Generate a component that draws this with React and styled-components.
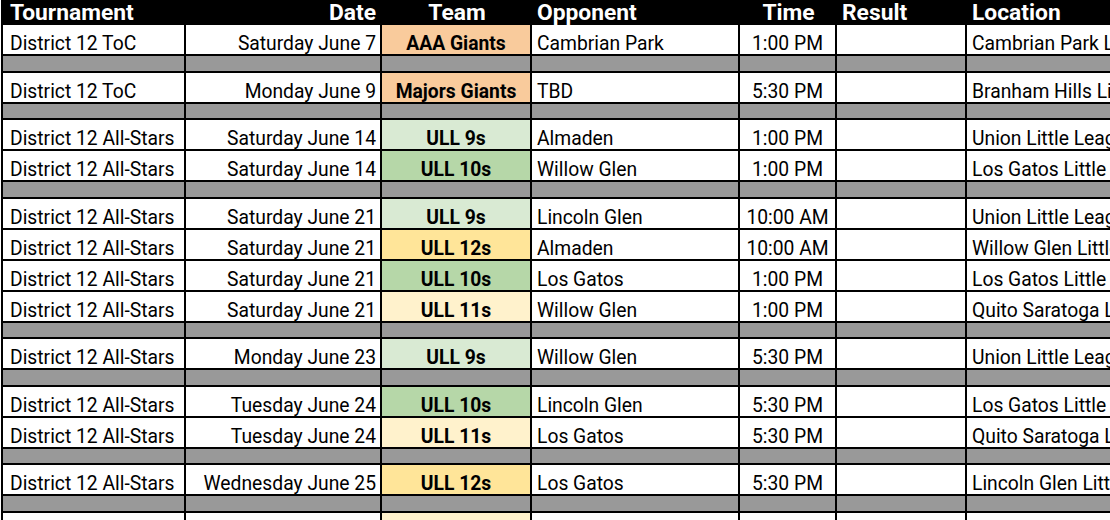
import React from "react";
import styled, { createGlobalStyle } from "styled-components";

const GlobalStyle = createGlobalStyle`
  html, body {
    margin: 0;
    padding: 0;
    background: #fff;
    overflow: hidden;
  }
  body {
    font-family: Roboto, "Liberation Sans", Arial, sans-serif;
    color: #000;
  }
`;

const COLS = "183px 196px 150px 208px 97px 130px 340px";

const TEAM_COLORS = {
  orange: "#f9cb9c",
  mint: "#d9ead3",
  green: "#b6d7a8",
  cream: "#fff2cc",
  yellow: "#ffe599",
};

const Sheet = styled.div`
  width: max-content;
  margin-left: 1px;
  border-left: 2px solid #000;
`;

const Row = styled.div`
  display: grid;
  grid-template-columns: ${COLS};
  box-sizing: border-box;
  height: ${(p) => p.$h}px;
  border-bottom: 2px solid #000;
  background: ${(p) => p.$bg || "#fff"};
`;

const HeaderRow = styled.div`
  display: grid;
  grid-template-columns: ${COLS};
  height: 25px;
  background: #000;
  color: #fff;
`;

const HeadCell = styled.div`
  display: flex;
  align-items: center;
  justify-content: ${(p) => p.$justify || "flex-start"};
  padding: 0 ${(p) => p.$pr ?? 5}px 0 ${(p) => p.$pl ?? 5}px;
  font-size: 22.8px;
  font-weight: 700;
  line-height: 24px;
  white-space: nowrap;
`;

const Cell = styled.div`
  box-sizing: border-box;
  display: flex;
  align-items: flex-end;
  justify-content: ${(p) => p.$justify || "flex-start"};
  padding: 0 ${(p) => p.$pr ?? 5}px 0 ${(p) => p.$pl ?? 5}px;
  border-right: 2px solid #000;
  background: ${(p) => p.$bg || "transparent"};
  font-size: 19.3px;
  font-weight: ${(p) => (p.$bold ? 700 : 400)};
  line-height: 20px;
  white-space: nowrap;
`;

const games = [
  ["District 12 ToC", "Saturday June 7", "AAA Giants", "orange", "Cambrian Park", "1:00 PM", "Cambrian Park Little League", true],
  ["District 12 ToC", "Monday June 9", "Majors Giants", "orange", "TBD", "5:30 PM", "Branham Hills Little League", true],
  ["District 12 All-Stars", "Saturday June 14", "ULL 9s", "mint", "Almaden", "1:00 PM", "Union Little League"],
  ["District 12 All-Stars", "Saturday June 14", "ULL 10s", "green", "Willow Glen", "1:00 PM", "Los Gatos Little League", true],
  ["District 12 All-Stars", "Saturday June 21", "ULL 9s", "mint", "Lincoln Glen", "10:00 AM", "Union Little League"],
  ["District 12 All-Stars", "Saturday June 21", "ULL 12s", "yellow", "Almaden", "10:00 AM", "Willow Glen Little League"],
  ["District 12 All-Stars", "Saturday June 21", "ULL 10s", "green", "Los Gatos", "1:00 PM", "Los Gatos Little League"],
  ["District 12 All-Stars", "Saturday June 21", "ULL 11s", "cream", "Willow Glen", "1:00 PM", "Quito Saratoga Little League", true],
  ["District 12 All-Stars", "Monday June 23", "ULL 9s", "mint", "Willow Glen", "5:30 PM", "Union Little League", true],
  ["District 12 All-Stars", "Tuesday June 24", "ULL 10s", "green", "Lincoln Glen", "5:30 PM", "Los Gatos Little League"],
  ["District 12 All-Stars", "Tuesday June 24", "ULL 11s", "cream", "Los Gatos", "5:30 PM", "Quito Saratoga Little League", true],
  ["District 12 All-Stars", "Wednesday June 25", "ULL 12s", "yellow", "Los Gatos", "5:30 PM", "Lincoln Glen Little League", true],
  ["District 12 All-Stars", "Thursday June 26", "ULL 11s", "cream", "Willow Glen", "5:30 PM", "Quito Saratoga Little League"],
];

function Spacer() {
  return (
    <Row $h={16.5} $bg="#999">
      {Array.from({ length: 7 }).map((_, i) => (
        <Cell key={i} />
      ))}
    </Row>
  );
}

export default function App() {
  return (
    <>
      <GlobalStyle />
      <Sheet>
        <HeaderRow>
          <HeadCell $pl={7}>Tournament</HeadCell>
          <HeadCell $justify="flex-end" $pr={6}>Date</HeadCell>
          <HeadCell $justify="center">Team</HeadCell>
          <HeadCell>Opponent</HeadCell>
          <HeadCell $justify="center">Time</HeadCell>
          <HeadCell>Result</HeadCell>
          <HeadCell>Location</HeadCell>
        </HeaderRow>

        {games.map((g, i) => (
          <React.Fragment key={i}>
            <Row $h={31}>
              <Cell $pl={7}>{g[0]}</Cell>
              <Cell $justify="flex-end" $pr={4}>{g[1]}</Cell>
              <Cell $justify="center" $bold $bg={TEAM_COLORS[g[3]]}>
                {g[2]}
              </Cell>
              <Cell>{g[4]}</Cell>
              <Cell $justify="center">{g[5]}</Cell>
              <Cell />
              <Cell>{g[6]}</Cell>
            </Row>
            {g[7] && <Spacer />}
          </React.Fragment>
        ))}
      </Sheet>
    </>
  );
}
